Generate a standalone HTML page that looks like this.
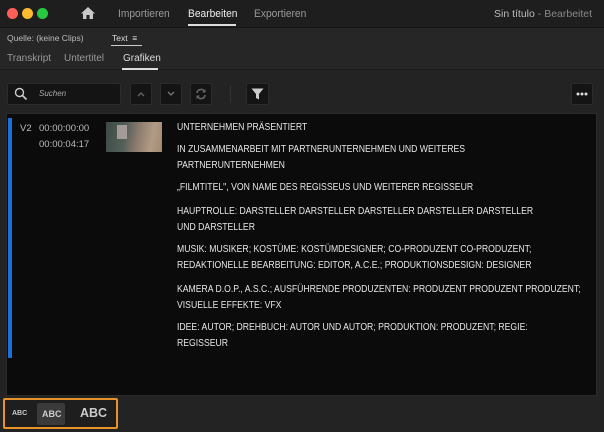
<!DOCTYPE html>
<html><head><meta charset="utf-8"><style>
*{margin:0;padding:0;box-sizing:border-box}
body{width:604px;height:432px;background:#232323;font-family:"Liberation Sans",sans-serif;color:#c8c8c8;position:relative;overflow:hidden}
.a{position:absolute}
.top{left:0;top:0;width:604px;height:28px;background:#1e1e1e;border-bottom:1px solid #151515}
.dot{width:11px;height:11px;border-radius:50%;top:8px}
.nav{top:8px;font-size:11px;color:#9a9a9a;transform:scaleX(.93);transform-origin:0 0}
.btn{background:#141414;border:1px solid #2c2c2c;border-radius:2px}
.t{left:177px;font-size:10.2px;color:#e6e6e6;white-space:nowrap;transform:scaleX(0.85);transform-origin:0 0}
</style></head><body>
<div class="a top"></div>
<div class="a dot" style="left:7px;background:#fe5f57"></div>
<div class="a dot" style="left:22px;background:#febc2e"></div>
<div class="a dot" style="left:37px;background:#28c840"></div>
<svg class="a" style="left:80px;top:6px" width="16" height="14" viewBox="0 0 16 14"><path d="M8 1L1 7.5h2V13h3.5V9h3v4H13V7.5h2z" fill="#c8c8c8"/></svg>
<div class="a nav" style="left:118px">Importieren</div>
<div class="a nav" style="left:188px;color:#eee">Bearbeiten</div>
<div class="a" style="left:188px;top:24px;width:48px;height:2px;background:#ddd"></div>
<div class="a nav" style="left:254px">Exportieren</div>
<div class="a" style="left:494px;top:8px;font-size:10.5px;color:#bbb">Sin título <span style="color:#888">- Bearbeitet</span></div>
<div class="a" style="left:0;top:28px;width:604px;height:42px;background:#262626;border-bottom:1px solid #1a1a1a"></div>
<div class="a" style="left:7px;top:33px;font-size:8.5px;color:#bbb">Quelle: (keine Clips)</div>
<div class="a" style="left:112px;top:33px;font-size:8.5px;color:#ddd">Text &nbsp;≡</div>
<div class="a" style="left:111px;top:45px;width:31px;height:1px;background:#ccc"></div>
<div class="a" style="left:7px;top:53px;font-size:10px;color:#999">Transkript</div>
<div class="a" style="left:64px;top:53px;font-size:10px;color:#999">Untertitel</div>
<div class="a" style="left:123px;top:53px;font-size:10px;color:#ddd">Grafiken</div>
<div class="a" style="left:122px;top:68px;width:36px;height:2px;background:#ddd"></div>
<div class="a btn" style="left:7px;top:83px;width:114px;height:22px"></div>
<svg class="a" style="left:14px;top:87px" width="14" height="14" viewBox="0 0 14 14"><circle cx="5.5" cy="5.5" r="4" fill="none" stroke="#ccc" stroke-width="1.4"/><path d="M8.5 8.5L12.5 12.5" stroke="#ccc" stroke-width="1.6"/></svg>
<div class="a" style="left:39px;top:89px;font-size:8px;font-style:italic;color:#aaa">Suchen</div>
<div class="a btn" style="left:130px;top:83px;width:22px;height:22px"></div>
<svg class="a" style="left:136px;top:90px" width="10" height="8" viewBox="0 0 10 8"><path d="M2 6L5 3L8 6" fill="none" stroke="#666" stroke-width="1.3"/></svg>
<div class="a btn" style="left:160px;top:83px;width:22px;height:22px"></div>
<svg class="a" style="left:166px;top:90px" width="10" height="8" viewBox="0 0 10 8"><path d="M2 2L5 5L8 2" fill="none" stroke="#777" stroke-width="1.3"/></svg>
<div class="a btn" style="left:190px;top:83px;width:22px;height:22px"></div>
<svg class="a" style="left:195px;top:88px" width="12" height="12" viewBox="0 0 12 12"><path d="M2 5A4 4 0 0 1 9.5 3.5M10 7A4 4 0 0 1 2.5 8.5" fill="none" stroke="#666" stroke-width="1.6"/><path d="M10.5 1v3.5H7zM1.5 11V7.5H5z" fill="#666"/></svg>
<div class="a" style="left:230px;top:85px;width:1px;height:18px;background:#333"></div>
<div class="a btn" style="left:246px;top:83px;width:23px;height:22px"></div>
<svg class="a" style="left:251px;top:88px" width="13" height="12" viewBox="0 0 13 12"><path d="M0.5 0.5h12L8 6v5.5L5 10V6z" fill="#ccc"/></svg>
<div class="a btn" style="left:571px;top:83px;width:22px;height:22px"></div>
<svg class="a" style="left:574px;top:92px" width="16" height="4" viewBox="0 0 16 4"><circle cx="4" cy="2" r="1.5" fill="#ddd"/><circle cx="8" cy="2" r="1.5" fill="#ddd"/><circle cx="12" cy="2" r="1.5" fill="#ddd"/></svg>
<div class="a" style="left:6px;top:113px;width:591px;height:283px;background:#0b0b0b;border:1px solid #2a2a2a"></div>
<div class="a" style="left:8px;top:118px;width:4px;height:240px;background:#1c6fd8"></div>
<div class="a" style="left:20px;top:123px;font-size:9.5px;color:#bbb">V2</div>
<div class="a" style="left:39px;top:123px;font-size:9.5px;color:#bbb">00:00:00:00</div>
<div class="a" style="left:39px;top:139px;font-size:9.5px;color:#bbb">00:00:04:17</div>
<div class="a" style="left:106px;top:122px;width:56px;height:30px;background:linear-gradient(100deg,#3d4a44 0%,#55605a 35%,#8a7a6e 55%,#b29b84 80%,#a08a74 100%)"></div>
<div class="a" style="left:117px;top:125px;width:10px;height:14px;background:#c7b7b5;opacity:.7"></div>
<div class="a t" style="top:122px">UNTERNEHMEN PRÄSENTIERT</div>
<div class="a t" style="top:144px">IN ZUSAMMENARBEIT MIT PARTNERUNTERNEHMEN UND WEITERES</div>
<div class="a t" style="top:160px">PARTNERUNTERNEHMEN</div>
<div class="a t" style="top:182px">„FILMTITEL", VON NAME DES REGISSEUS UND WEITERER REGISSEUR</div>
<div class="a t" style="top:206px">HAUPTROLLE: DARSTELLER DARSTELLER DARSTELLER DARSTELLER DARSTELLER</div>
<div class="a t" style="top:222px">UND DARSTELLER</div>
<div class="a t" style="top:244px">MUSIK: MUSIKER; KOSTÜME: KOSTÜMDESIGNER; CO-PRODUZENT CO-PRODUZENT;</div>
<div class="a t" style="top:260px">REDAKTIONELLE BEARBEITUNG: EDITOR, A.C.E.; PRODUKTIONSDESIGN: DESIGNER</div>
<div class="a t" style="top:284px">KAMERA D.O.P., A.S.C.; AUSFÜHRENDE PRODUZENTEN: PRODUZENT PRODUZENT PRODUZENT;</div>
<div class="a t" style="top:300px">VISUELLE EFFEKTE: VFX</div>
<div class="a t" style="top:322px">IDEE: AUTOR; DREHBUCH: AUTOR UND AUTOR; PRODUKTION: PRODUZENT; REGIE:</div>
<div class="a t" style="top:338px">REGISSEUR</div>
<div class="a" style="left:3px;top:398px;width:115px;height:31px;border:2px solid #e8922a;border-radius:2px;background:#1e1e1e"></div>
<div class="a" style="left:37px;top:403px;width:28px;height:22px;background:#3a3a3a;border-radius:2px"></div>
<div class="a" style="left:12px;top:410px;font-size:7px;font-weight:bold;color:#ccc">ABC</div>
<div class="a" style="left:42px;top:409px;font-size:9px;font-weight:bold;color:#ccc">ABC</div>
<div class="a" style="left:80px;top:406px;font-size:12.5px;font-weight:bold;color:#ccc">ABC</div>
</body></html>
